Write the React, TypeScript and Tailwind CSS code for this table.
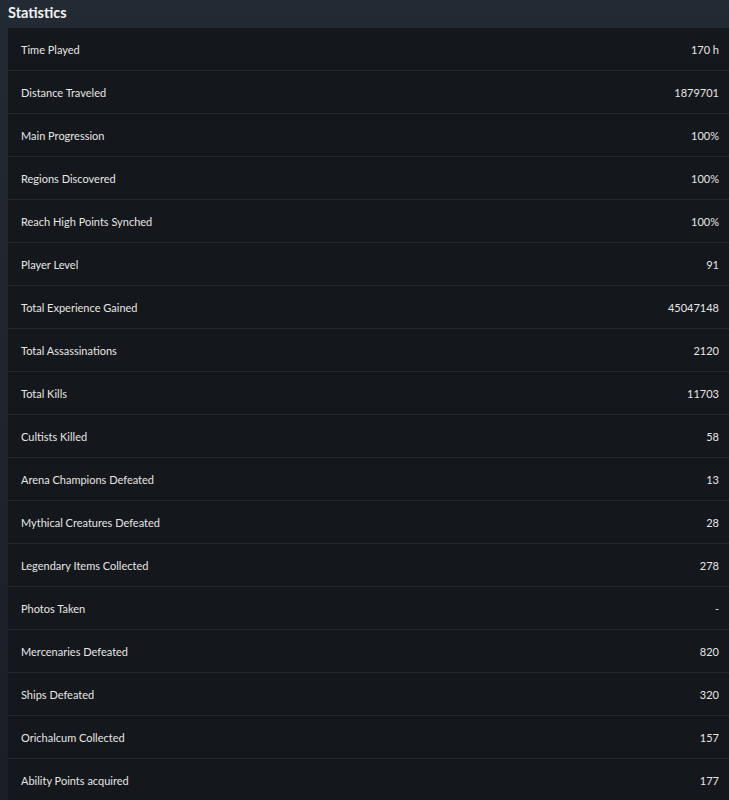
const stats = [
  { label: "Time Played", value: "170 h" },
  { label: "Distance Traveled", value: "1879701" },
  { label: "Main Progression", value: "100%" },
  { label: "Regions Discovered", value: "100%" },
  { label: "Reach High Points Synched", value: "100%" },
  { label: "Player Level", value: "91" },
  { label: "Total Experience Gained", value: "45047148" },
  { label: "Total Assassinations", value: "2120" },
  { label: "Total Kills", value: "11703" },
  { label: "Cultists Killed", value: "58" },
  { label: "Arena Champions Defeated", value: "13" },
  { label: "Mythical Creatures Defeated", value: "28" },
  { label: "Legendary Items Collected", value: "278" },
  { label: "Photos Taken", value: "-" },
  { label: "Mercenaries Defeated", value: "820" },
  { label: "Ships Defeated", value: "320" },
  { label: "Orichalcum Collected", value: "157" },
  { label: "Ability Points acquired", value: "177" },
];

export default function App() {
  return (
    <div
      className="min-h-[800px] w-full bg-gradient-to-b from-[#222a33] to-[#1a1f25] pl-2 overflow-hidden"
      style={{ fontFamily: 'Lato, "Noto Sans", Arial, sans-serif' }}
    >
      <h2 className="h-7 pt-[3px] text-[14.5px] font-bold leading-[20px] text-[#f2f2f2]">Statistics</h2>
      <div className="bg-[#14171b]">
        {stats.map((s) => (
          <div
            key={s.label}
            className="flex h-[43px] items-center justify-between border-b border-[#24282d] pt-[2px] pl-[13px] pr-[10px] text-[11px] text-[#e6e6e6]"
          >
            <span>{s.label}</span>
            <span>{s.value}</span>
          </div>
        ))}
      </div>
    </div>
  );
}
